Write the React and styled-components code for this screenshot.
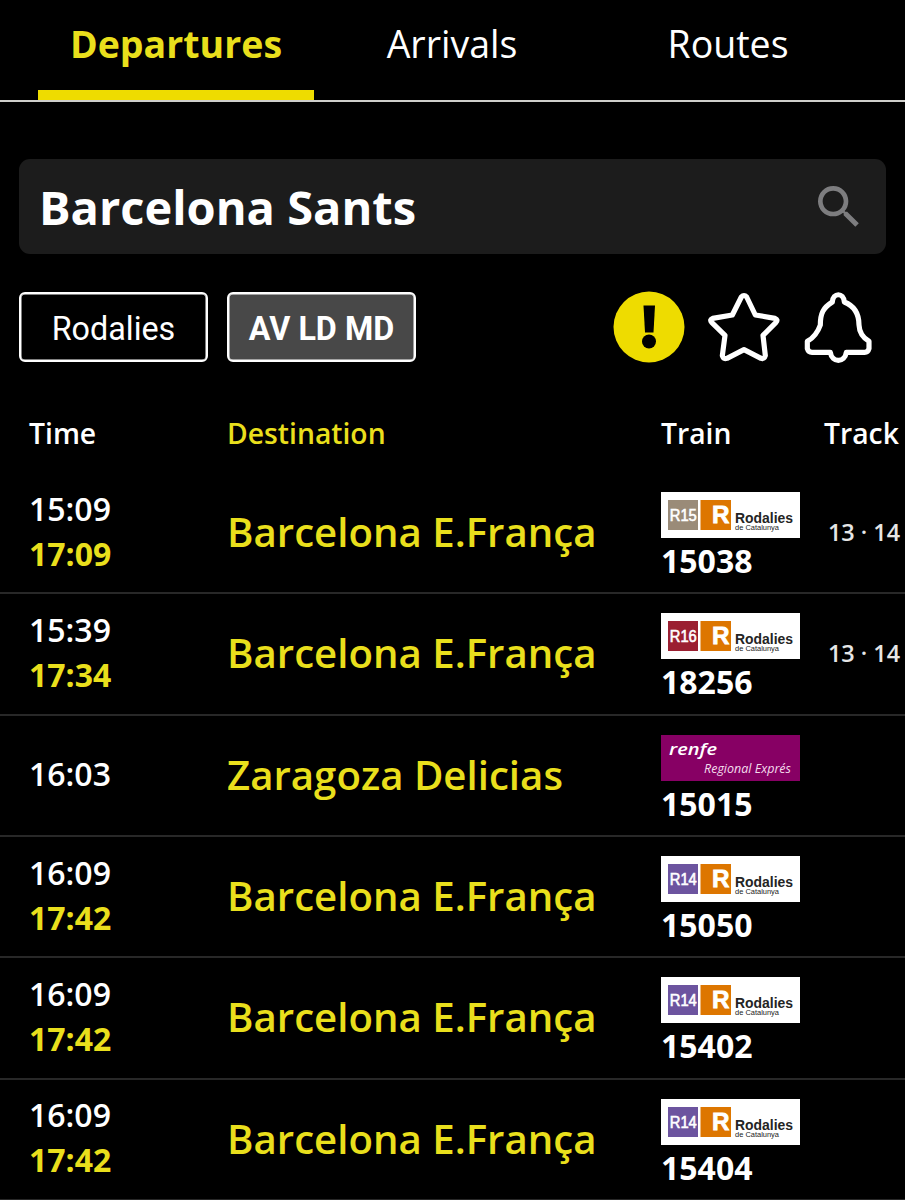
import React, { useState } from "react";
import styled, { createGlobalStyle } from "styled-components";
import { MdSearch } from "react-icons/md";

const GlobalStyle = createGlobalStyle`
  * {
    box-sizing: border-box;
  }
  body {
    margin: 0;
    background-color: #000;
    color: #fff;
    font-family: "Open Sans", "Noto Sans", sans-serif;
  }
  button {
    font-family: inherit;
    color: inherit;
    cursor: pointer;
  }
`;

const StyledApp = styled.div`
  width: 905px;
  height: 1200px;
  overflow: hidden;
  background-color: #000;
`;

const StyledTabs = styled.nav`
  height: 102px;
  padding: 0 39px 0 38px;
  display: flex;
  border-bottom: 2px solid #cfcfcb;
`;

const StyledTab = styled.button`
  width: 276px;
  height: 100px;
  padding: 0 0 ${({ $active }) => ($active ? "4px" : "14px")};
  background: none;
  border: none;
  border-bottom: ${({ $active }) => ($active ? "10px solid #eedc00" : "none")};
  color: ${({ $active }) => ($active ? "#e9df1c" : "#fff")};
  font-size: 37.5px;
  font-weight: ${({ $active }) => ($active ? 700 : 400)};
`;

const StyledSearch = styled.div`
  height: 95px;
  margin: 57px 19px 0;
  padding: 0 19px 0 20px;
  display: flex;
  justify-content: space-between;
  align-items: center;
  background-color: #1c1c1c;
  border-radius: 11px;
  font-size: 47px;
  font-weight: 700;

  svg {
    color: #7d7d7f;
  }
`;

const StyledFilters = styled.div`
  height: 72px;
  margin: 37px 32px 0 19px;
  display: flex;
  align-items: center;
  gap: 19px;
`;

const StyledFilter = styled.button`
  width: 189px;
  height: 70px;
  padding: 3px 0 0;
  background-color: ${({ $active }) => ($active ? "#484848" : "#000")};
  border: 2px solid #fff;
  border-radius: 6px;
  box-shadow: inset 0 0 0 0.5px #fff;
  font-family: Roboto, sans-serif;
  font-size: 32.3px;
  font-weight: ${({ $active }) => ($active ? 700 : 400)};
`;

const StyledActions = styled.div`
  margin-left: auto;
  display: flex;
  align-items: center;
  gap: 22.5px;

  svg {
    display: block;
  }
`;

const columns = "198px 434px 163px 1fr";

const StyledTableHead = styled.div`
  height: 110px;
  padding: 29px 0 0 29px;
  display: grid;
  grid-template-columns: ${columns};
  align-items: center;
  font-size: 28.3px;
  font-weight: 600;
`;

const StyledHeadCell = styled.span`
  color: ${({ $yellow }) => ($yellow ? "#e9df1c" : "#fff")};
`;

const StyledRow = styled.div`
  height: 121.33px;
  padding-left: 29px;
  display: grid;
  grid-template-columns: ${columns};
  align-items: center;
  border-bottom: 2px solid #282828;
`;

const StyledTime = styled.div`
  padding-bottom: 4px;
  display: flex;
  flex-direction: column;
  font-size: 32px;
  font-weight: 600;
  line-height: 45px;
`;

const StyledDelayed = styled.span`
  color: #e9df1c;
  font-weight: 700;
`;

const StyledDestination = styled.div`
  padding-bottom: 2px;
  color: #e9df1c;
  font-size: 40.2px;
  font-weight: 600;
  white-space: nowrap;
`;

const StyledTrain = styled.div`
  padding-top: 6px;
  display: flex;
  flex-direction: column;
  font-size: 32px;
  font-weight: 700;
  line-height: 36px;

  svg {
    display: block;
    margin-bottom: 5px;
  }
`;

const StyledTrack = styled.div`
  padding: 0 0 2px 4px;
  color: #e6e6e6;
  font-size: 23.4px;
  font-weight: 600;
  white-space: nowrap;
`;

const lineColors = {
  R14: "#6c549f",
  R15: "#9a8b78",
  R16: "#9b1f31",
};

const departures = [
  { id: 1, time: "15:09", delayed: "17:09", destination: "Barcelona E.França", line: "R15", train: "15038", track: "13 · 14" },
  { id: 2, time: "15:39", delayed: "17:34", destination: "Barcelona E.França", line: "R16", train: "18256", track: "13 · 14" },
  { id: 3, time: "16:03", destination: "Zaragoza Delicias", train: "15015" },
  { id: 4, time: "16:09", delayed: "17:42", destination: "Barcelona E.França", line: "R14", train: "15050" },
  { id: 5, time: "16:09", delayed: "17:42", destination: "Barcelona E.França", line: "R14", train: "15402" },
  { id: 6, time: "16:09", delayed: "17:42", destination: "Barcelona E.França", line: "R14", train: "15404" },
];

const AlertIcon = () => (
  <svg width="72" height="72" viewBox="0 0 72 72">
    <circle cx="36" cy="36" r="35.5" fill="#eedc00" />
    <path d="M30.5 14.5h11.5l-1.5 27h-8.5z" fill="#000" />
    <circle cx="36" cy="50.5" r="7" fill="#000" />
  </svg>
);

const StarIcon = () => (
  <svg width="74" height="72" viewBox="324 33 222 216" overflow="visible" fill="none" stroke="#fff" strokeWidth="15.5" strokeLinejoin="round">
    <path d="M424 51Q432 42 440 51L466 105L525 115Q535 119 528 127L489 166L496 227Q493 238 483 235L432 209L381 235Q370 238 367 227L375 166L335 127Q328 119 338 115L397 105Z" />
  </svg>
);

const BellIcon = () => (
  <svg width="69" height="72" viewBox="612 33 207 216" fill="none" stroke="#fff" strokeWidth="15.5" strokeLinejoin="round">
    <path d="M697 66C699 37 731 37 733 66C761 77 777 99 777 135C778 158 790 174 807 184V206Q804 217 794 217H739C734 249 696 249 691 217H636Q625 217 622 206V184C640 174 653 158 661 135C661 99 670 83 697 66Z" />
  </svg>
);

const RodaliesLogo = ({ line }) => (
  <svg width="139" height="46" viewBox="0 0 139 46" fontFamily="Liberation Sans, sans-serif" fontWeight="400">
    <rect width="139" height="46" fill="#fff" />
    <rect x="7" y="8" width="30" height="30" fill={lineColors[line]} />
    <text x="8.8" y="29" fontSize="16" stroke="#fff" strokeWidth="0.6" fill="#fff" textLength="27" lengthAdjust="spacingAndGlyphs">
      {line}
    </text>
    <rect x="39.5" y="8" width="30.5" height="30" fill="#dd7600" />
    <text x="51" y="30.5" fontSize="24" fontWeight="700" fill="#fff" stroke="#fff" strokeWidth="0.8" textLength="17.5" lengthAdjust="spacingAndGlyphs">
      R
    </text>
    <text x="74" y="30.5" fontSize="14" fontWeight="700" fill="#242424" textLength="58" lengthAdjust="spacingAndGlyphs">
      Rodalies
    </text>
    <text x="74" y="38.2" fontSize="7.5" fill="#222" textLength="44" lengthAdjust="spacingAndGlyphs">
      de Catalunya
    </text>
  </svg>
);

const RenfeLogo = () => (
  <svg width="139" height="46" viewBox="0 0 139 46" fontFamily="Open Sans, sans-serif" fontStyle="italic" fontWeight="400" fill="#fff">
    <rect width="139" height="46" fill="#870064" />
    <text x="8" y="19.5" fontSize="16" fontWeight="600" textLength="48" lengthAdjust="spacingAndGlyphs">
      renfe
    </text>
    <text x="43" y="38" fontSize="13.5" fill="#f3dcec" textLength="87" lengthAdjust="spacingAndGlyphs">
      Regional Exprés
    </text>
  </svg>
);

const DepartureRow = ({ item }) => {
  return (
    <StyledRow>
      <StyledTime>
        <span>{item.time}</span>
        {item.delayed && <StyledDelayed>{item.delayed}</StyledDelayed>}
      </StyledTime>
      <StyledDestination>{item.destination}</StyledDestination>
      <StyledTrain>
        {item.line ? <RodaliesLogo line={item.line} /> : <RenfeLogo />}
        <span>{item.train}</span>
      </StyledTrain>
      <StyledTrack>{item.track}</StyledTrack>
    </StyledRow>
  );
};

const App = () => {
  const [tab, setTab] = useState("Departures");
  const [filter, setFilter] = useState("AV LD MD");

  return (
    <StyledApp>
      <GlobalStyle />
      <StyledTabs>
        {["Departures", "Arrivals", "Routes"].map((name) => (
          <StyledTab key={name} $active={tab === name} onClick={() => setTab(name)}>
            {name}
          </StyledTab>
        ))}
      </StyledTabs>

      <StyledSearch>
        <span>Barcelona Sants</span>
        <MdSearch size={56} />
      </StyledSearch>

      <StyledFilters>
        {["Rodalies", "AV LD MD"].map((name) => (
          <StyledFilter key={name} $active={filter === name} onClick={() => setFilter(name)}>
            {name}
          </StyledFilter>
        ))}
        <StyledActions>
          <AlertIcon />
          <StarIcon />
          <BellIcon />
        </StyledActions>
      </StyledFilters>

      <StyledTableHead>
        <StyledHeadCell>Time</StyledHeadCell>
        <StyledHeadCell $yellow>Destination</StyledHeadCell>
        <StyledHeadCell>Train</StyledHeadCell>
        <StyledHeadCell>Track</StyledHeadCell>
      </StyledTableHead>

      {departures.map((item) => (
        <DepartureRow key={item.id} item={item} />
      ))}
    </StyledApp>
  );
};
export default App;
